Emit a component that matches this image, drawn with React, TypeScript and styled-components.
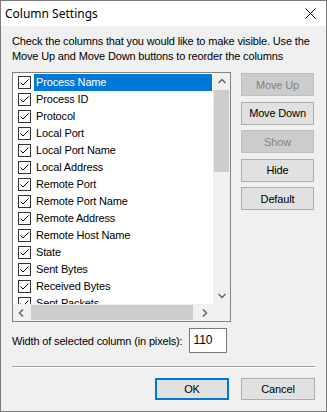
import React from "react";
import styled, { createGlobalStyle } from "styled-components";

const GlobalStyle = createGlobalStyle`
  html, body {
    margin: 0;
    padding: 0;
    background: #f0f0f0;
  }
  * {
    box-sizing: border-box;
  }
`;

const Window = styled.div`
  display: flex;
  flex-direction: column;
  width: 327px;
  height: 412px;
  border: 1px solid #7a7a7a;
  background: #f0f0f0;
  font-family: "Liberation Sans", Arial, sans-serif;
  font-size: 11px;
  letter-spacing: -0.15px;
  color: #000;
`;

const TitleBar = styled.div`
  display: flex;
  align-items: center;
  justify-content: space-between;
  height: 25px;
  padding: 0 10px 0 4px;
  background: #fff;
`;

const TitleText = styled.span`
  font-family: "Noto Sans", "Open Sans", sans-serif;
  font-size: 12px;
  letter-spacing: 0;
`;

const Body = styled.div`
  display: flex;
  flex-direction: column;
  padding: 8px 11px 0 11px;
`;

const Instructions = styled.p`
  margin: 0;
  line-height: 15px;
`;

const MainRow = styled.div`
  display: flex;
  margin-top: 8px;
`;

const ListBox = styled.div`
  display: flex;
  flex-direction: column;
  width: 219px;
  height: 250px;
  border: 1px solid #828282;
  background: #fff;
`;

const ListArea = styled.div`
  display: flex;
  flex: 1;
  min-height: 0;
`;

const Rows = styled.div`
  flex: 1;
  overflow: hidden;
  padding-top: 1px;
`;

const Row = styled.div`
  display: flex;
  align-items: center;
  height: 17px;
  padding-left: 5px;
`;

const CheckBox = styled.svg`
  flex: none;
  width: 13px;
  height: 13px;
  margin-right: 3px;
`;

const ItemLabel = styled.span<{ $selected?: boolean }>`
  flex: 1;
  height: 17px;
  line-height: 17px;
  margin-right: 1px;
  padding-left: 2px;
  white-space: nowrap;
  background: ${(p) => (p.$selected ? "#0078d7" : "transparent")};
  color: ${(p) => (p.$selected ? "#fff" : "#000")};
`;

const VScroll = styled.div`
  display: flex;
  flex-direction: column;
  width: 17px;
  background: #f0f0f0;
`;

const HScroll = styled.div`
  display: flex;
  height: 17px;
`;

const HTrack = styled.div`
  display: flex;
  align-items: center;
  flex: 1;
  background: #f0f0f0;
`;

const ScrollArrow = styled.div`
  display: flex;
  align-items: center;
  justify-content: center;
  flex: none;
  width: 17px;
  height: 17px;
`;

const VThumb = styled.div`
  height: 82px;
  margin: 0 1px;
  background: #cdcdcd;
`;

const VSpace = styled.div`
  flex: 1;
`;

const HThumb = styled.div`
  width: 162px;
  height: 15px;
  margin-left: 1px;
  background: #cdcdcd;
`;

const Corner = styled.div`
  width: 17px;
  background: #f0f0f0;
`;

const SideButtons = styled.div`
  display: flex;
  flex-direction: column;
  gap: 5.5px;
  padding-top: 1px;
  margin-left: 10px;
`;

const Button = styled.button<{ $default?: boolean; $width?: number; $height?: number }>`
  width: ${(p) => p.$width ?? 73}px;
  height: ${(p) => p.$height ?? 23}px;
  padding: 0;
  font-family: "Liberation Sans", Arial, sans-serif;
  font-size: 11px;
  letter-spacing: -0.15px;
  color: #000;
  background: #e1e1e1;
  border: ${(p) => (p.$default ? "2px solid #0078d7" : "1px solid #adadad")};
  border-radius: 0;

  &:disabled {
    background: #cccccc;
    border-color: #bfbfbf;
    color: #838383;
  }
`;

const WidthRow = styled.div`
  display: flex;
  align-items: center;
  gap: 6px;
  margin-top: 6px;
`;

const WidthInput = styled.div`
  width: 38px;
  height: 25px;
  padding: 0 0 0 4px;
  line-height: 23px;
  font-size: 12px;
  background: #fff;
  border: 1px solid #7a7a7a;
`;

const Separator = styled.div`
  height: 2px;
  margin-top: 13px;
  border-top: 1px solid #a0a0a0;
  border-bottom: 1px solid #fff;
`;

const Footer = styled.div`
  display: flex;
  justify-content: flex-end;
  gap: 12px;
  margin-top: 10px;
`;

const columns = [
  "Process Name",
  "Process ID",
  "Protocol",
  "Local Port",
  "Local Port Name",
  "Local Address",
  "Remote Port",
  "Remote Port Name",
  "Remote Address",
  "Remote Host Name",
  "State",
  "Sent Bytes",
  "Received Bytes",
  "Sent Packets",
];

const Chevron = ({ dir }: { dir: "up" | "down" | "left" | "right" }) => {
  const d = {
    up: "M0.5 5 L4 1.5 L7.5 5",
    down: "M0.5 2 L4 5.5 L7.5 2",
    left: "M5 0.5 L1.5 4 L5 7.5",
    right: "M2 0.5 L5.5 4 L2 7.5",
  }[dir];
  return (
    <svg width="8" height="8" viewBox="0 0 8 8">
      <path d={d} fill="none" stroke="#606060" strokeWidth="1.4" />
    </svg>
  );
};

const Check = () => (
  <CheckBox viewBox="0 0 13 13">
    <rect x="0.5" y="0.5" width="12" height="12" fill="#fff" stroke="#333" />
    <path d="M2.5 6.5 L5 9 L10.5 3.5" fill="none" stroke="#000" strokeWidth="1" />
  </CheckBox>
);

export default function App() {
  return (
    <>
      <GlobalStyle />
      <Window>
        <TitleBar>
          <TitleText>Column Settings</TitleText>
          <svg width="11" height="11" viewBox="0 0 11 11">
            <path d="M0.5 0.5 L10.5 10.5 M10.5 0.5 L0.5 10.5" stroke="#000" strokeWidth="1" />
          </svg>
        </TitleBar>
        <Body>
          <Instructions>
            Check the columns that you would like to make visible. Use the
            <br />
            Move Up and Move Down buttons to reorder the columns
          </Instructions>
          <MainRow>
            <ListBox>
              <ListArea>
                <Rows>
                  {columns.map((name, ind) => (
                    <Row key={name}>
                      <Check />
                      <ItemLabel $selected={ind === 0}>{name}</ItemLabel>
                    </Row>
                  ))}
                </Rows>
                <VScroll>
                  <ScrollArrow>
                    <Chevron dir="up" />
                  </ScrollArrow>
                  <VThumb />
                  <VSpace />
                  <ScrollArrow>
                    <Chevron dir="down" />
                  </ScrollArrow>
                </VScroll>
              </ListArea>
              <HScroll>
                <HTrack>
                  <ScrollArrow>
                    <Chevron dir="left" />
                  </ScrollArrow>
                  <HThumb />
                  <VSpace />
                  <ScrollArrow>
                    <Chevron dir="right" />
                  </ScrollArrow>
                </HTrack>
                <Corner />
              </HScroll>
            </ListBox>
            <SideButtons>
              <Button disabled>Move Up</Button>
              <Button>Move Down</Button>
              <Button disabled>Show</Button>
              <Button>Hide</Button>
              <Button>Default</Button>
            </SideButtons>
          </MainRow>
          <WidthRow>
            <span>Width of selected column (in pixels):</span>
            <WidthInput>110</WidthInput>
          </WidthRow>
          <Separator />
          <Footer>
            <Button $default $width={74} $height={22}>
              OK
            </Button>
            <Button $width={74} $height={22}>
              Cancel
            </Button>
          </Footer>
        </Body>
      </Window>
    </>
  );
}
